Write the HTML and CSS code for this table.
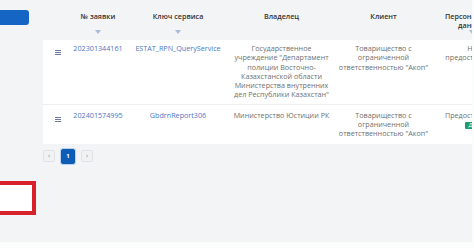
FILE: index.html
```html
<!DOCTYPE html>
<html lang="ru">
  <head>
    <meta charset="UTF-8" />
    <title>Заявки</title>
    <link rel="stylesheet" href="styles.css">
  </head>
  <body>
    <div class="page">
      <aside class="side">
        <div class="side-btn"></div>
        <div class="side-frame"></div>
      </aside>
      <main class="main">
        <table class="grid">
          <colgroup>
            <col class="c-icon" />
            <col class="c-id" />
            <col class="c-key" />
            <col class="c-owner" />
            <col class="c-client" />
            <col class="c-pd" />
          </colgroup>
          <thead>
            <tr>
              <th><div class="th-in"></div></th>
              <th><div class="th-in">№ заявки<span class="filter"></span></div></th>
              <th><div class="th-in">Ключ сервиса<span class="filter"></span></div></th>
              <th><div class="th-in">Владелец</div></th>
              <th><div class="th-in">Клиент</div></th>
              <th class="pd"><div class="th-in">Персональные данные<span class="filter"></span></div></th>
            </tr>
          </thead>
          <tbody>
            <tr>
              <td class="icon-cell"><span class="menu"><i></i><i></i><i></i></span></td>
              <td><a class="link">202301344161</a></td>
              <td><a class="link">ESTAT_RPN_QueryService</a></td>
              <td>Государственное учреждение "Департамент полиции Восточно-Казахстанской области Министерства внутренних дел Республики Казахстан"</td>
              <td>Товарищество с ограниченной ответственностью "Акоп"</td>
              <td class="pd">Не предоставлено</td>
            </tr>
            <tr>
              <td class="icon-cell"><span class="menu"><i></i><i></i><i></i></span></td>
              <td><a class="link">202401574995</a></td>
              <td><a class="link">GbdrnReport306</a></td>
              <td>Министерство Юстиции РК</td>
              <td>Товарищество с ограниченной ответственностью "Акоп"</td>
              <td class="pd">Предоставлено<br /><span class="badge">Да</span></td>
            </tr>
          </tbody>
        </table>
        <div class="pager">
          <span class="pg-btn">&lsaquo;</span>
          <span class="pg-btn active">1</span>
          <span class="pg-btn">&rsaquo;</span>
        </div>
      </main>
    </div>
  </body>
</html>
```

FILE: styles.css
```css
html {
  background: #fbfcfc;
}
body {
  margin: 0;
  font-family: "Open Sans", sans-serif;
  overflow: hidden;
}
.page {
  display: flex;
  width: 472px;
  height: 242px;
  background: #f3f4f5;
  overflow: hidden;
}
.side {
  width: 43px;
  flex: none;
  display: flex;
  flex-direction: column;
}
.side-btn {
  width: 29px;
  height: 15px;
  margin-top: 10px;
  background: #1565c4;
  border-radius: 0 3px 3px 0;
}
.side-frame {
  width: 36px;
  height: 34px;
  margin-top: 156px;
  box-sizing: border-box;
  border: 4px solid #d8222b;
  border-left: none;
  background: #fff;
}
.main {
  flex: 1;
  min-width: 0;
  overflow: hidden;
}
.grid {
  table-layout: fixed;
  width: 469px;
  border-collapse: collapse;
  font-size: 7.2px;
  line-height: 9.3px;
  color: #707070;
}
.c-icon { width: 25px; }
.c-id { width: 60px; }
.c-key { width: 100px; }
.c-owner { width: 107px; }
.c-client { width: 97px; }
.c-pd { width: 80px; }
.grid th {
  padding: 0 2px;
  font-weight: 600;
  color: #333;
  font-size: 7.2px;
  line-height: 8.5px;
  vertical-align: top;
}
.th-in {
  height: 40px;
  box-sizing: border-box;
  padding-top: 12px;
  display: flex;
  flex-direction: column;
  align-items: center;
  text-align: center;
}
.filter {
  margin-top: auto;
  margin-bottom: 6px;
  width: 0;
  height: 0;
  border-left: 3.5px solid transparent;
  border-right: 3.5px solid transparent;
  border-top: 4px solid #a8bcdc;
}
.grid tbody tr {
  background: #fff;
  border-bottom: 1px solid #eceef1;
}
.grid tbody tr:last-child {
  border-bottom: none;
}
.grid td {
  padding: 4px 2px;
  text-align: center;
  vertical-align: top;
}
.grid tbody tr:last-child td {
  padding-top: 6px;
  padding-bottom: 5px;
}
.grid .pd {
  padding-left: 8px;
  padding-right: 8px;
}
.grid td.icon-cell {
  text-align: right;
  padding-right: 7px;
}
.menu {
  display: inline-flex;
  flex-direction: column;
  gap: 1px;
  margin-top: 2px;
}
.menu i {
  display: block;
  width: 6px;
  height: 1px;
  background: #6c7a9e;
}
.link {
  color: #4b78c6;
}
.badge {
  display: inline-block;
  margin-top: 1px;
  padding: 0 4px;
  background: #1f9c6b;
  color: #fff;
  font-size: 5.5px;
  line-height: 7px;
  border-radius: 1px;
}
.pager {
  display: flex;
  align-items: center;
  gap: 6px;
  margin-top: 5px;
}
.pg-btn {
  width: 12px;
  height: 12px;
  box-sizing: border-box;
  border: 1px solid #dfe3e8;
  background: #f0f2f4;
  border-radius: 2px;
  color: #8a94a3;
  font-size: 7px;
  line-height: 10px;
  text-align: center;
}
.pg-btn.active {
  width: 14px;
  height: 15px;
  background: #0d5cb6;
  border-color: #0d5cb6;
  box-shadow: 0 0 0 1px #b9d0ee;
  color: #fff;
  font-weight: 700;
  font-size: 6px;
  line-height: 13px;
}
```
